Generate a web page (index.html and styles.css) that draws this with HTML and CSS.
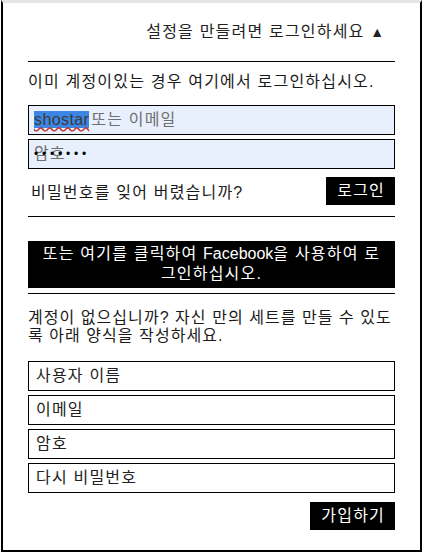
FILE: index.html
```html
<!DOCTYPE html>
<html lang="ko">
<head>
  <meta charset="UTF-8">
  <title>로그인</title>
  <link rel="stylesheet" href="styles.css">
</head>
<body>
<div class="panel">
  <div class="panel-head">설정을 만들려면 로그인하세요 <span class="arrow">▲</span></div>
  <hr class="rule">
  <p class="intro">이미 계정이있는 경우 여기에서 로그인하십시오.</p>
  <div class="fields">
    <div class="field filled"><span class="autofill">shostar</span><span class="hint">또는 이메일</span></div>
    <div class="field filled"><span class="hint">암호</span><span class="dots">•••••••</span></div>
  </div>
  <div class="login-row">
    <span class="forgot">비밀번호를 잊어 버렸습니까?</span>
    <span class="btn">로그인</span>
  </div>
  <hr class="rule">
  <div class="fb-btn">또는 여기를 클릭하여 <span class="latin">Facebook</span>을 사용하여 로그인하십시오.</div>
  <hr class="rule rule-tight">
  <p class="signup-text">계정이 없으십니까? 자신 만의 세트를 만들 수 있도록 아래 양식을 작성하세요.</p>
  <div class="fields">
    <div class="field">사용자 이름</div>
    <div class="field">이메일</div>
    <div class="field">암호</div>
    <div class="field">다시 비밀번호</div>
  </div>
  <div class="signup-row">
    <span class="btn">가입하기</span>
  </div>
</div>
</body>
</html>
```

FILE: styles.css
```css
html, body {
    margin: 0;
    background: #fff;
}

body {
    font-family: "Liberation Sans", "Noto Sans CJK KR", sans-serif;
    font-size: 16px;
    letter-spacing: 1.2px;
    color: #1a1a1a;
}

.panel {
    box-sizing: border-box;
    margin-left: 1px;
    height: 552px;
    border: 2px solid #000;
    border-top: 3px solid #e4e4e4;
    padding: 0 25px;
}

.panel-head {
    padding: 19px 11px 0 0;
    line-height: 20px;
    text-align: right;
    color: #222;
}

.arrow {
    font-size: 14px;
    letter-spacing: 0;
}

.rule {
    margin: 19px 0 0;
    border: 0;
    border-top: 1px solid #000;
}

.intro {
    margin: 10px 0 0;
    line-height: 20px;
}

.fields {
    display: flex;
    flex-direction: column;
    gap: 4px;
    margin-top: 13px;
}

.field {
    box-sizing: border-box;
    height: 30px;
    border: 1px solid #000;
    padding: 0 7px;
    line-height: 28px;
    color: #222;
    position: relative;
    white-space: nowrap;
}

.field.filled {
    background: #e8f0fe;
    padding-left: 5px;
}

.autofill {
    background: #3b86e4;
    color: #3a3a3a;
    letter-spacing: 0.4px;
    text-decoration: underline wavy #c0392b;
    margin-right: 2px;
}

.hint {
    color: #6f6f6f;
}

.dots {
    position: absolute;
    left: 5px;
    top: 0;
    color: #000;
    letter-spacing: 3.8px;
    font-size: 12px;
}

.login-row {
    display: flex;
    justify-content: space-between;
    align-items: center;
    margin-top: 8px;
}

.forgot {
    padding-left: 3px;
}

.btn {
    background: #000;
    color: #fff;
    line-height: 28px;
    padding: 0 10px 0 11px;
}

.login-row + .rule {
    margin-top: 11px;
}

.fb-btn {
    margin-top: 24px;
    background: #000;
    color: #fff;
    text-align: center;
    line-height: 20px;
    padding: 3px 12px 4px;
}

.latin {
    letter-spacing: 0;
}

.rule-tight {
    margin-top: 5px;
}

.signup-text {
    margin: 15px 0 0;
    line-height: 18px;
    letter-spacing: 1.05px;
}

.signup-text + .fields {
    margin-top: 16px;
}

.signup-row {
    display: flex;
    justify-content: flex-end;
    margin-top: 9px;
}
```
